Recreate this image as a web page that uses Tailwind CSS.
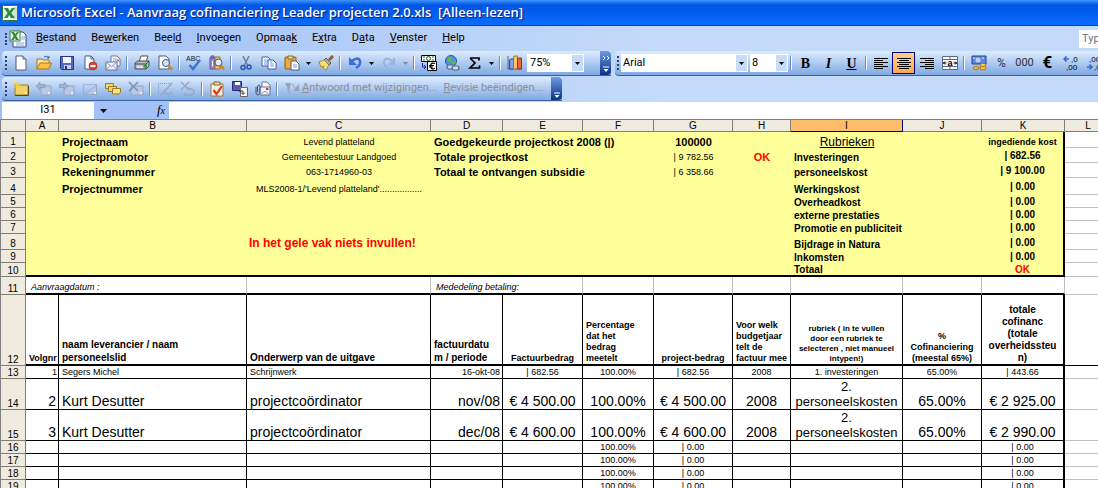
<!DOCTYPE html>
<html lang="nl">
<head>
<meta charset="utf-8">
<title>Microsoft Excel</title>
<script src="https://cdn.jsdelivr.net/npm/@tailwindcss/browser@4"></script>
</head>
<body class="h-screen overflow-hidden bg-white font-['Roboto','Noto_Sans',sans-serif] text-[11px] text-black">
<div class="flex h-full flex-col overflow-hidden">

<header class="flex h-[26px] shrink-0 items-center gap-[3px] bg-linear-to-b from-[#3d95ff] via-[#0054e3] via-20% to-[#0a6cff] border-b border-[#0040c8] pl-[2px]">
  <svg class="size-4 shrink-0" viewBox="0 0 16 16"><rect x=".5" y=".5" width="15" height="15" rx="1" fill="#fff" stroke="#2c7a36"/><path d="M11 2h4v12h-4z" fill="#cfe3d0"/><path d="M2 3h10v10H2z" fill="#e4f1e4"/><path d="M2 3h4l1.700 3L10 3h3L9.300 8l3.700 5H9L7.200 10 5.500 13H2l3.600-5z" fill="#2f8a3a"/></svg>
  <h1 class="whitespace-pre font-['Open_Sans',sans-serif] text-[13px] font-semibold text-white [text-shadow:1px_1px_1px_#0a1883]">Microsoft Excel - Aanvraag cofinanciering Leader projecten 2.0.xls  [Alleen-lezen]</h1>
</header>

<div class="shrink-0 bg-linear-to-r from-[#9ebef5] to-[#c4daf9] to-60%">
  <nav class="flex h-[25px] items-center pl-[5px]">
    <span class="mr-[2px] h-[12px] w-[2px] border-l-2 border-dotted border-[#27417a]"></span>
    <svg class="mr-[9px] size-[18px] shrink-0" viewBox="0 0 18 18"><path d="M8 2h6l3 3v12H4v-5" fill="#fff" stroke="#2a4a9a"/><path d="M12 7h4M12 9h4M7 13h8M7 15h8" stroke="#8aa5d8"/><path d="M1 1h10v10H1z" fill="#fff" stroke="#2c7a36"/><path d="M2 2h3l1.200 2L8 2h2L7.300 6 10 10H7L5.800 8 4.500 10H2l2.700-4z" fill="#2f8a3a"/></svg>
    <div class="flex gap-[15px] whitespace-nowrap">
      <button><u>B</u>estand</button><button>Be<u>w</u>erken</button><button>Beel<u>d</u></button><button><u>I</u>nvoegen</button><button>Opmaa<u>k</u></button><button>E<u>x</u>tra</button><button>D<u>a</u>ta</button><button><u>V</u>enster</button><button><u>H</u>elp</button>
    </div>
    <input aria-label="Typ een vraag" placeholder="Typ" class="ml-auto h-[18px] w-[19px] bg-white pl-[3px] text-[11px] placeholder:text-gray-500">
  </nav>

  <div class="flex h-[25px] gap-[4px] overflow-hidden pl-[2px]">
    <div class="flex shrink-0 items-center rounded-l border-b border-[#3b619c] bg-linear-to-b from-[#ddecfe] to-[#81a9e2] [&>button]:flex [&>button]:h-[22px] [&>button]:w-[23px] [&>button]:shrink-0 [&>button]:items-center [&>button]:justify-center [&_svg]:size-4 [&>i]:mx-[2px] [&>i]:h-[14px] [&>i]:w-[2px] [&>i]:border-l [&>i]:border-[#6a8ccb] [&>i]:bg-white">
      <span class="ml-[3px] mr-[2px] h-[14px] w-[2px] shrink-0 border-l-2 border-dotted border-[#27417a]"></span>
      <button aria-label="Nieuw"><svg viewBox="0 0 16 16"><path d="M3 1h7l3 3v11H3z" fill="#fff" stroke="#4a5c86"/><path d="M10 1v3h3" fill="#c6d4ee" stroke="#4a5c86"/></svg></button>
      <button aria-label="Openen"><svg viewBox="0 0 16 16"><path d="M1 14V4h5l1 1h6v3" fill="#ffe69a" stroke="#a8781c"/><path d="M1 14l3-6h11.500l-3 6z" fill="#fbc044" stroke="#a8781c"/><path d="M8 2q3-2 5 1m0-2v2h-2" fill="none" stroke="#3a5fa8"/></svg></button>
      <button aria-label="Opslaan"><svg viewBox="0 0 16 16"><path d="M1.500 1.500h13v13h-12l-1-1z" fill="#5468c4" stroke="#27338a"/><path d="M4 2h8v6H4z" fill="#f4f6ff"/><path d="M5 10h7v4H5z" fill="#c9cfe8"/><path d="M6 11h2v3H6z" fill="#27338a"/></svg></button>
      <button aria-label="Machtiging"><svg viewBox="0 0 16 16"><path d="M3 1h6l3 3v10H3z" fill="#fff" stroke="#4a5c86"/><path d="M9 1v3h3" fill="none" stroke="#4a5c86"/><circle cx="11" cy="11" r="4" fill="#e2492f" stroke="#a52410" stroke-width=".7"/><path d="M8.500 11h5" stroke="#fff" stroke-width="2"/></svg></button>
      <button aria-label="E-mail"><svg viewBox="0 0 16 16"><path d="M6 1h6l3 3v7H6z" fill="#fff" stroke="#66749a"/><path d="M8 4h4M8 6h5" stroke="#8aa5d8"/><path d="M12 4.500h2v2h-2z" fill="#e0662e"/><path d="M1 7h11v8H1z" fill="#f1f4fc" stroke="#66749a"/><path d="M1 7l5.500 4.500L12 7M1 15l4-4.500M12 15l-4-4.500" fill="none" stroke="#8d99b8"/></svg></button>
      <i></i>
      <button aria-label="Afdrukken"><svg viewBox="0 0 16 16"><path d="M5 7l2-6h7l-2 6z" fill="#fff" stroke="#555"/><path d="M1 8l3-2h11v5l-3 3H1z" fill="#b9bdc6" stroke="#444a58"/><path d="M1 9h11l3-3M12 9v5" fill="none" stroke="#444a58"/><path d="M3 12h6" stroke="#fff"/><path d="M9.500 11h3" stroke="#1ba81b" stroke-width="3"/></svg></button>
      <button aria-label="Afdrukvoorbeeld"><svg viewBox="0 0 16 16"><path d="M2 1h7l3 3v10H2z" fill="#fff" stroke="#4a5c86"/><circle cx="9" cy="8" r="3.500" fill="#cde4f8" stroke="#4d5a70"/><path d="M11.500 10.500L15 14.500" stroke="#c58a2b" stroke-width="2.500"/></svg></button>
      <i></i>
      <button aria-label="Spelling"><svg viewBox="0 0 16 16"><text x="0" y="6" font-family="Liberation Sans" font-size="7" fill="#222">ABC</text><path d="M3.500 10l3.500 4 7-9" fill="none" stroke="#3e74d8" stroke-width="2.500"/></svg></button>
      <button aria-label="Onderzoeken"><svg viewBox="0 0 16 16"><path d="M2 1h3v2H2z" fill="#b9a0e0" stroke="#5c4a9a"/><path d="M1 3h5v11H1z" fill="#9d8be0" stroke="#5c4a9a"/><path d="M6 2h5v12H6z" fill="#f0c060" stroke="#9a7420"/><path d="M3 6h1v5H3z" fill="#fff"/><circle cx="9.500" cy="7.500" r="3.500" fill="#dceefb" stroke="#4d5a70"/><path d="M12 10.500L15 14.500" stroke="#c58a2b" stroke-width="2.500"/></svg></button>
      <i></i>
      <button aria-label="Knippen"><svg viewBox="0 0 16 16"><path d="M5 1l5 10M11 1L6 11" stroke="#6d7f9f" stroke-width="1.500"/><circle cx="5" cy="12.500" r="2" fill="none" stroke="#2855b0" stroke-width="1.500"/><circle cx="11" cy="12" r="2" fill="none" stroke="#2855b0" stroke-width="1.500"/></svg></button>
      <button aria-label="Kopiëren"><svg viewBox="0 0 16 16"><path d="M1 2h6l2 2v7H1z" fill="#fff" stroke="#3c61b0"/><path d="M3 5h4M3 7h4M3 9h3" stroke="#7d9bdc"/><path d="M7 5h5l3 3v6H7z" fill="#fff" stroke="#3c61b0"/><path d="M9 9h4M9 11h4M9 7h2" stroke="#7d9bdc"/></svg></button>
      <button aria-label="Plakken"><svg viewBox="0 0 16 16"><rect x="1" y="2" width="11" height="12" rx="1" fill="#f0a83c" stroke="#8a5f14"/><path d="M4 1h5v3H4z" fill="#f3dc8c" stroke="#7a6a3a"/><path d="M7 6h5l3 3v6H7z" fill="#fff" stroke="#4a5c86"/><path d="M9 10h4M9 12h4" stroke="#7d9bdc"/></svg></button>
      <svg class="w-[11px]! shrink-0" viewBox="0 0 11 16"><path d="M3 7h5L5.500 10z"/></svg>
      <button aria-label="Opmaak kopiëren"><svg viewBox="0 0 16 16"><path d="M15 1l-4 4" stroke="#8a5f2a" stroke-width="3"/><path d="M8 3l5 5-2 2-5-5z" fill="#a9a4c8" stroke="#5a5570"/><path d="M1 7l5-2 5 5-3 5-3-2 1-2-3 1z" fill="#f5df84" stroke="#a58a2c"/></svg></button>
      <i></i>
      <button aria-label="Ongedaan maken"><svg viewBox="0 0 16 16"><path d="M5 6q6-5 8 0 1 4-4 7" fill="none" stroke="#3b6fd6" stroke-width="2.500"/><path d="M2 2v8h8z" fill="#3b6fd6"/></svg></button>
      <svg class="w-[11px]! shrink-0" viewBox="0 0 11 16"><path d="M3 7h5L5.500 10z"/></svg>
      <button aria-label="Opnieuw"><svg viewBox="0 0 16 16"><path d="M11 6q-6-5-8 0-1 4 4 7" fill="none" stroke="#9fb4dc" stroke-width="2"/><path d="M14 2v8H7z" fill="#9fb4dc"/></svg></button>
      <svg class="w-[11px]! shrink-0" viewBox="0 0 11 16"><path d="M3 7h5L5.500 10z" fill="#808a9c"/></svg>
      <i></i>
      <button aria-label="Euro omrekenen"><svg viewBox="0 0 16 16"><path d="M.5.500h14v6H.5z" fill="#fff" stroke="#000"/><circle cx="7.500" cy="3.500" r="2" fill="none" stroke="#187018"/><path d="M2 2h2M11 2h2M2 5h2M11 5h2" stroke="#187018"/><path d="M6.500 6.500h9v9h-9z" fill="#fff" stroke="#000"/><path d="M14 8.500q-4-1.500-4.500 2.500.5 4 4.500 2.500M8 10.500h5M8 12h4" fill="none" stroke="#000" stroke-width="1.200"/><path d="M1.500 8v4h3M3 10l2 2-2 2" fill="none" stroke="#2020b0"/></svg></button>
      <button aria-label="Hyperlink"><svg viewBox="0 0 16 16"><circle cx="7" cy="6" r="5.500" fill="#4d93e0" stroke="#2b5a9c"/><path d="M3 3q3-3 5 0l-1 3-3 1zM8 7l4-2v3l-3 2z" fill="#5fb64c"/><rect x="3" y="10" width="7" height="4" rx="2" fill="#cfd9ea" stroke="#59667e" stroke-width="1.200"/><rect x="8" y="11" width="7" height="4" rx="2" fill="#cfd9ea" stroke="#59667e" stroke-width="1.200"/></svg></button>
      <button aria-label="AutoSom"><svg viewBox="0 0 16 16"><path d="M3 3h9v2.500M3 3l5 5-5 5h9.500v-2.500" fill="none" stroke="#000" stroke-width="1.700"/></svg></button>
      <svg class="w-[11px]! shrink-0" viewBox="0 0 11 16"><path d="M3 7h5L5.500 10z"/></svg>
      <i></i>
      <button aria-label="Grafieken"><svg viewBox="0 0 16 16"><path d="M1 1v13h14" fill="none" stroke="#59667e"/><path d="M2.500 5l1-1h3v10h-4z" fill="#7d9ee8" stroke="#2e4a98"/><path d="M6.500 2l1-1h3v13h-4z" fill="#f6c956" stroke="#9a7420"/><path d="M10.500 4l1-1h3v11h-4z" fill="#e8643c" stroke="#94321a"/></svg></button>
      <div class="relative mx-[1px] h-[18px] w-[57px] shrink-0 bg-white">
        <select aria-label="In- en uitzoomen" class="h-full w-full appearance-none pl-[3px] text-[11px]"><option>75%</option></select>
        <span class="pointer-events-none absolute inset-y-px right-px flex w-[11px] items-center justify-center bg-[#c6dbf8]"><svg class="size-[5px]!" viewBox="0 0 5 3"><path d="M0 0h5L2.500 3z"/></svg></span>
      </div>
      <button aria-label="Werkbalkopties" class="ml-[15px] w-[11px]! h-full! self-stretch rounded-r bg-linear-to-b from-[#6f9be4] to-[#0a3187]"><svg class="h-5! w-2!" viewBox="0 0 8 20"><path d="M1 3l2 2-2 2M5 3l2 2-2 2M1 14h6" fill="none" stroke="#fff"/><path d="M1.500 16h5L4 19z" fill="#fff"/></svg></button>
    </div>
    <div class="flex grow items-center rounded-l border-b border-[#3b619c] bg-linear-to-b from-[#ddecfe] to-[#81a9e2] [&>button]:flex [&>button]:h-[22px] [&>button]:w-[23px] [&>button]:shrink-0 [&>button]:items-center [&>button]:justify-center [&_svg]:size-4 [&>i]:mx-[2px] [&>i]:h-[14px] [&>i]:w-[2px] [&>i]:shrink-0 [&>i]:border-l [&>i]:border-[#6a8ccb] [&>i]:bg-white">
      <span class="mx-[2px] h-[14px] w-[2px] shrink-0 border-l-2 border-dotted border-[#27417a]"></span>
      <div class="relative h-[18px] w-[127px] shrink-0 bg-white">
        <select aria-label="Lettertype" class="h-full w-full appearance-none pl-[2px] text-[11px]"><option>Arial</option></select>
        <span class="pointer-events-none absolute inset-y-px right-px flex w-[11px] items-center justify-center bg-[#c6dbf8]"><svg class="size-[5px]!" viewBox="0 0 5 3"><path d="M0 0h5L2.500 3z"/></svg></span>
      </div>
      <div class="relative ml-[2px] h-[18px] w-[38px] shrink-0 bg-white">
        <select aria-label="Tekengrootte" class="h-full w-full appearance-none pl-[2px] text-[11px]"><option>8</option></select>
        <span class="pointer-events-none absolute inset-y-px right-px flex w-[11px] items-center justify-center bg-[#c6dbf8]"><svg class="size-[5px]!" viewBox="0 0 5 3"><path d="M0 0h5L2.500 3z"/></svg></span>
      </div>
      <i></i>
      <button class="font-['Liberation_Serif',serif] text-[14px] font-bold">B</button>
      <button class="font-['Liberation_Serif',serif] text-[14px] font-bold italic">I</button>
      <button class="font-['Liberation_Serif',serif] text-[14px] font-bold underline">U</button>
      <i></i>
      <button aria-label="Links uitlijnen"><svg viewBox="0 0 16 16"><path d="M1 3.500h14M1 5.500h9M1 7.500h14M1 9.500h9M1 11.500h14M1 13.500h9" stroke="#000"/></svg></button>
      <button aria-label="Centreren" class="border border-[#000080] bg-linear-to-b from-[#ffd08c] to-[#ffa850]"><svg viewBox="0 0 16 16"><path d="M1 3.500h14M3 5.500h10M1 7.500h14M3 9.500h10M1 11.500h14M3 13.500h10" stroke="#000"/></svg></button>
      <button aria-label="Rechts uitlijnen"><svg viewBox="0 0 16 16"><path d="M1 3.500h14M6 5.500h9M1 7.500h14M6 9.500h9M1 11.500h14M6 13.500h9" stroke="#000"/></svg></button>
      <button aria-label="Samenvoegen en centreren"><svg viewBox="0 0 16 16"><path d="M.5 1.500h15v13H.5z" fill="#fff" stroke="#5a6b8c"/><path d="M0 4.500h16M0 11.500h16M8 1v3.500M8 11.500V15" stroke="#5a6b8c"/><path d="M1 8h3.500M15 8h-3.500M3 6.500L1.500 8 3 9.500M13 6.500L14.500 8 13 9.500" fill="none" stroke="#000"/><text x="5.500" y="10.500" font-family="Liberation Sans" font-size="9" font-weight="bold">a</text></svg></button>
      <i></i>
      <button aria-label="Valuta"><svg viewBox="0 0 16 16"><path d="M1 1h14v8H1z" fill="#5f86dc" stroke="#27479a"/><circle cx="7" cy="5" r="2.500" fill="#bdd0f6"/><path d="M2 3h2M11 3h2" stroke="#dfe9ff"/><ellipse cx="12" cy="13" rx="3" ry="2" fill="#f5c23c" stroke="#a87812"/><ellipse cx="12" cy="10" rx="3" ry="1.500" fill="#fbd663" stroke="#a87812"/><ellipse cx="5" cy="13" rx="3" ry="1.500" fill="#f5c23c" stroke="#a87812"/></svg></button>
      <button class="text-[12px] text-[#333]">%</button>
      <button class="text-[11px] text-[#333]">000</button>
      <button class="text-[17px] font-bold">€</button>
      <button aria-label="Meer decimalen"><svg viewBox="0 0 16 16"><path d="M1 4h5M3.500 1.500L1 4l2.500 2.500" fill="none" stroke="#3569cc" stroke-width="1.500"/><text x="8" y="7" font-family="Liberation Sans" font-size="8">,0</text><text x="3" y="15" font-family="Liberation Sans" font-size="8">,00</text></svg></button>
      <button aria-label="Minder decimalen"><svg viewBox="0 0 16 16"><path d="M1 12h5M3.500 9.500L6 12l-2.500 2.500" fill="none" stroke="#3569cc" stroke-width="1.500"/><text x="3" y="7" font-family="Liberation Sans" font-size="8">,00</text><text x="8" y="15" font-family="Liberation Sans" font-size="8">,0</text></svg></button>
    </div>
  </div>

  <div class="flex h-[26px] pb-px pt-px pl-[2px]">
    <div class="flex shrink-0 items-center rounded-l border-b border-[#3b619c] bg-linear-to-b from-[#ddecfe] to-[#81a9e2] [&>button]:flex [&>button]:h-[22px] [&>button]:w-[23px] [&>button]:shrink-0 [&>button]:items-center [&>button]:justify-center [&_svg]:size-4 [&>i]:mx-[2px] [&>i]:h-[14px] [&>i]:w-[2px] [&>i]:border-l [&>i]:border-[#6a8ccb] [&>i]:bg-white">
      <span class="ml-[3px] mr-[2px] h-[14px] w-[2px] shrink-0 border-l-2 border-dotted border-[#27417a]"></span>
      <button aria-label="Nieuwe opmerking"><svg viewBox="0 0 16 16"><path d="M2 4h13v8l-2 2H2z" fill="#f0d468" stroke="#9a7a22"/><path d="M2 14.500h13.500V5" fill="none" stroke="#5a4810"/><path d="M12 11h2v2h-2z" fill="#fff6c8"/><path d="M4 0v8M0 4h8M1 1l6 6M7 1L1 7" stroke="#f8d030"/></svg></button>
      <button aria-label="Vorige opmerking"><svg viewBox="0 0 16 16"><path d="M5 5h10v9H5z" fill="#b7c8e6" stroke="#98a8c6"/><path d="M12 11h2v2h-2z" fill="#e4edfb"/><path d="M0 5l4-4v2.500h5v3H4V9z" fill="#a3b3d0" stroke="#8090b0" stroke-width=".6"/></svg></button>
      <button aria-label="Volgende opmerking"><svg viewBox="0 0 16 16"><path d="M5 5h10v9H5z" fill="#b7c8e6" stroke="#98a8c6"/><path d="M12 11h2v2h-2z" fill="#e4edfb"/><path d="M9 5L5 1v2.500H0v3h5V9z" fill="#a3b3d0" stroke="#8090b0" stroke-width=".6"/></svg></button>
      <button aria-label="Opmerking weergeven"><svg viewBox="0 0 16 16"><path d="M1.500 3.500h13v10h-13z" fill="none" stroke="#8b9ab8" stroke-dasharray="1 1"/><path d="M14.500 4v9.500H3z" fill="#b7c8e6" stroke="#98a8c6"/><path d="M12 11h2v2h-2z" fill="#e4edfb"/></svg></button>
      <button aria-label="Alle opmerkingen"><svg viewBox="0 0 16 16"><path d="M.5 2.500h8v5h-8z" fill="#f7d469" stroke="#9a7a22"/><path d="M3.500 5.500h8v5h-8z" fill="#f7d469" stroke="#9a7a22"/><path d="M7.500 7.500h8v4l-2 1.500h-6z" fill="#fbe08a" stroke="#9a7a22"/></svg></button>
      <button aria-label="Opmerking verwijderen"><svg viewBox="0 0 16 16"><path d="M3 5h12v9H3z" fill="#b7c8e6" stroke="#98a8c6"/><path d="M12 11h2v2h-2z" fill="#e4edfb"/><path d="M1 1l9 9M10 1l-9 9" stroke="#8090b0" stroke-width="1.500"/></svg></button>
      <i></i>
      <button aria-label="Inktannotatie"><svg viewBox="0 0 16 16"><path d="M1 2.500h13M1.500 2v11" fill="none" stroke="#8b9ab8" stroke-dasharray="1 1"/><path d="M15 2L6 12M3 14q5-3 7-1t5-2" fill="none" stroke="#98a8c6" stroke-width="1.500"/></svg></button>
      <button aria-label="Inkt verwijderen"><svg viewBox="0 0 16 16"><path d="M1 1l8 8M9 1L1 9" stroke="#98a8c6" stroke-width="1.500"/><path d="M4 13q7 3 10-1 1-4-7-5" fill="none" stroke="#98a8c6" stroke-width="1.500"/></svg></button>
      <i></i>
      <button aria-label="Taak maken"><svg viewBox="0 0 16 16"><path d="M2 3h12v12H2z" fill="#f6f0e2" stroke="#a8703a"/><path d="M5 1h6v3H5z" fill="#f3dc8c" stroke="#7a6a3a"/><path d="M4.500 9l3 4L13 5" fill="none" stroke="#d93a1c" stroke-width="2.200"/></svg></button>
      <button aria-label="Bestand bijwerken"><svg viewBox="0 0 16 16"><path d="M.5.500h9v9h-9z" fill="#5c5cae" stroke="#27277a"/><path d="M3 1h5v3H3z" fill="#fff"/><path d="M8.500 6.500h7v9h-7z" fill="#fff" stroke="#666"/><path d="M6 10h5v3M9 11.500l2 2 2-2" fill="none" stroke="#333"/></svg></button>
      <button aria-label="Als bijlage verzenden"><svg viewBox="0 0 16 16"><path d="M7 1h5l3 3v5H7z" fill="#fff" stroke="#66749a"/><path d="M5 6h10v8H5z" fill="#f1f4fc" stroke="#66749a"/><path d="M5 14l5-4 5 4" fill="none" stroke="#8d99b8"/><path d="M1 6v6q1.500 4 4 0V5q-1.200-2-2.500 0v6" fill="none" stroke="#444f66"/><path d="M11 8h2.500" stroke="#d93a1c" stroke-width="2"/></svg></button>
      <i></i>
      <button class="w-auto! gap-[2px] whitespace-nowrap pl-[4px] pr-[6px] text-[#8c8f98]"><svg viewBox="0 0 16 16"><path d="M1 2h6l-1 4-2 5-1-5zM15 3v7H9z" fill="#9aa3b8"/><path d="M4 6q2 2 1 7M8 3q2 3 4 5" fill="none" stroke="#9aa3b8"/></svg><span><u>A</u>ntwoord met wijzigingen...</span></button>
      <button class="w-auto! whitespace-nowrap pr-[8px] text-[#8c8f98]"><span><u>R</u>evisie beëindigen...</span></button>
      <button aria-label="Werkbalkopties" class="w-[11px]! h-full! self-stretch rounded-r bg-linear-to-b from-[#6f9be4] to-[#0a3187]"><svg class="h-5! w-2!" viewBox="0 0 8 20"><path d="M1 14h6" stroke="#fff"/><path d="M1.500 16h5L4 19z" fill="#fff"/></svg></button>
    </div>
  </div>

  <div class="flex h-[17px] pl-[2px]">
    <input aria-label="Naamvak" value="I31" class="w-[92px] bg-white text-center text-[11px]">
    <button aria-label="Namen" class="flex w-[19px] items-center justify-center bg-[#a3c1f6]"><svg class="h-1 w-[7px]" viewBox="0 0 7 4"><path d="M0 0h7L3.500 4z"/></svg></button>
    <button aria-label="Functie invoegen" class="w-[56px] bg-[#a3c1f6] pr-[4px] text-right font-['Liberation_Serif',serif] text-[13px] leading-[14px] italic">f<span class="text-[10px]">x</span></button>
    <input aria-label="Formule" class="min-w-0 grow bg-white">
  </div>
</div>

<main class="min-h-0 grow overflow-hidden border-l border-t border-[#808080] bg-white">
<table class="w-[1111px] table-fixed border-separate border-spacing-0 font-['Liberation_Sans',sans-serif] text-[9px] leading-[11px] [&_td]:overflow-hidden [&_td]:whitespace-nowrap [&_td]:px-[3px] [&_td]:py-0 [&_td]:align-bottom [&_th]:border-b [&_th]:border-r [&_th]:border-[#808070] [&_th]:bg-[#efebde] [&_th]:p-0 [&_th]:align-bottom [&_th]:text-[10px] [&_th]:font-normal">
<colgroup><col class="w-[25px]"><col class="w-[33px]"><col class="w-[188px]"><col class="w-[184px]"><col class="w-[72px]"><col class="w-[80px]"><col class="w-[71px]"><col class="w-[79px]"><col class="w-[58px]"><col class="w-[112px]"><col class="w-[79px]"><col class="w-[83px]"><col class="w-[47px]"></colgroup>
<thead><tr class="h-[12px]"><th></th><th>A</th><th>B</th><th>C</th><th>D</th><th>E</th><th>F</th><th>G</th><th>H</th><th class="border-[#000080]! bg-[#ffbd6b]!">I</th><th>J</th><th>K</th><th>L</th></tr></thead>
<tbody class="[&_td]:bg-[#ffff99] [&_td:nth-child(3)]:text-[11px] [&_td:nth-child(3)]:font-bold [&_td:nth-last-child(2)]:border-r-2 [&_td:nth-last-child(2)]:border-black [&_td:nth-last-child(2)]:text-center [&_td:nth-last-child(2)]:align-middle [&_td:nth-last-child(2)]:text-[10px] [&_td:nth-last-child(2)]:font-bold [&_td:nth-last-child(3)]:text-[10px] [&_td:nth-last-child(3)]:font-bold [&_td:last-child]:border-b [&_td:last-child]:border-[#c0c0c0] [&_td:last-child]:bg-white">
<tr class="h-[16px]"><th>1</th><td></td><td>Projectnaam</td><td class="text-center">Levend platteland</td><td colspan="3" class="text-[11px] font-bold">Goedgekeurde projectkost 2008 (|)</td><td class="text-center text-[11px] font-bold">100000</td><td></td><td class="text-center text-[12px]! font-normal! underline">Rubrieken</td><td></td><td class="align-bottom! text-[9px]!">ingediende kost</td><td></td></tr>
<tr class="h-[15px]"><th>2</th><td></td><td>Projectpromotor</td><td class="text-center">Gemeentebestuur Landgoed</td><td colspan="3" class="text-[11px] font-bold">Totale projectkost</td><td class="text-center">| 9 782.56</td><td class="text-center text-[11px] font-bold text-[#ff0000]">OK</td><td colspan="2">Investeringen</td><td>| 682.56</td><td></td></tr>
<tr class="h-[15px]"><th>3</th><td></td><td>Rekeningnummer</td><td class="text-center">063-1714960-03</td><td colspan="3" class="text-[11px] font-bold">Totaal te ontvangen subsidie</td><td class="text-center">| 6 358.66</td><td></td><td colspan="2">personeelskost</td><td>| 9 100.00</td><td></td></tr>
<tr class="h-[17px]"><th>4</th><td></td><td>Projectnummer</td><td class="text-center">MLS2008-1/'Levend platteland'.................</td><td colspan="3"></td><td></td><td></td><td colspan="2">Werkingskost</td><td>| 0.00</td><td></td></tr>
<tr class="h-[13px]"><th>5</th><td></td><td></td><td></td><td colspan="3"></td><td></td><td></td><td colspan="2">Overheadkost</td><td>| 0.00</td><td></td></tr>
<tr class="h-[13px]"><th>6</th><td></td><td></td><td></td><td colspan="3"></td><td></td><td></td><td colspan="2">externe prestaties</td><td>| 0.00</td><td></td></tr>
<tr class="h-[13px]"><th>7</th><td></td><td></td><td></td><td colspan="3"></td><td></td><td></td><td colspan="2">Promotie en publiciteit</td><td>| 0.00</td><td></td></tr>
<tr class="h-[16px]"><th>8</th><td></td><td></td><td class="pl-[2px]! text-[12px] leading-[14px] font-bold text-[#ff0000]">In het gele vak niets invullen!</td><td colspan="3"></td><td></td><td></td><td colspan="2">Bijdrage in Natura</td><td>| 0.00</td><td></td></tr>
<tr class="h-[13px]"><th>9</th><td></td><td></td><td></td><td colspan="3"></td><td></td><td></td><td colspan="2">Inkomsten</td><td>| 0.00</td><td></td></tr>
<tr class="h-[14px] [&_td:not(:last-child)]:border-b-2 [&_td]:border-black"><th>10</th><td></td><td></td><td></td><td colspan="3"></td><td></td><td></td><td colspan="2">Totaal</td><td class="text-[#ff0000]">OK</td><td></td></tr>
</tbody>
<tbody class="[&_td]:border-r [&_td]:border-r-[#c0c0c0] [&_td]:border-b-2 [&_td]:border-b-black [&_td:last-child]:border-b [&_td:last-child]:border-b-[#c0c0c0]">
<tr class="h-[18px]"><th>11</th><td colspan="2" class="pl-[5px]! italic">Aanvraagdatum :</td><td></td><td colspan="2" class="pl-[5px]! italic">Mededeling betaling:</td><td></td><td></td><td></td><td></td><td></td><td></td><td></td></tr>
</tbody>
<tbody class="[&_td]:border-r [&_td]:border-b [&_td]:border-black [&_td:nth-child(12)]:border-r-2 [&_td:nth-child(n+7)]:text-center [&_td:nth-child(6)]:text-center">
<tr class="h-[71px] font-bold [&_td:not(:last-child)]:border-b-2"><th>12</th><td>Volgnr</td><td class="text-[10px] leading-[13px]">naam leverancier / naam<br>personeelslid</td><td class="text-[10px] leading-[13px]">Onderwerp van de uitgave</td><td class="text-[10px] leading-[13px]">factuurdatu<br>m / periode</td><td>Factuurbedrag</td><td class="text-left!">Percentage<br>dat het<br>bedrag<br>meetelt</td><td>project-bedrag</td><td class="text-left!">Voor welk<br>budgetjaar<br>telt de<br>factuur mee</td><td class="px-0! text-[8px] leading-[10px]">rubriek ( in te vullen<br>door een rubriek te<br>selecteren , niet manueel<br>intypen!)</td><td>%<br>Cofinanciering<br>(meestal 65%)</td><td class="text-[10px] leading-[12px]">totale<br>cofinanc<br>(totale<br>overheidssteu<br>n)</td><td></td></tr>
<tr class="h-[13px]"><th>13</th><td class="pr-px! text-right">1</td><td>Segers Michel</td><td>Schrijnwerk</td><td class="pr-[2px]! text-right">16-okt-08</td><td>| 682.56</td><td>100.00%</td><td>| 682.56</td><td>2008</td><td>1. investeringen</td><td>65.00%</td><td>| 443.66</td><td class="border-[#c0c0c0]!"></td></tr>
<tr class="h-[31px] text-[14px] leading-[15px]"><th class="leading-[11px]">14</th><td class="pr-[2px]! text-right">2</td><td>Kurt Desutter</td><td>projectcoördinator</td><td class="pr-[2px]! text-right">nov/08</td><td>€ 4 500.00</td><td>100.00%</td><td>€ 4 500.00</td><td>2008</td><td class="px-0! text-[13px]">2.<br>personeelskosten</td><td>65.00%</td><td>€ 2 925.00</td><td class="border-[#c0c0c0]!"></td></tr>
<tr class="h-[31px] text-[14px] leading-[15px]"><th class="leading-[11px]">15</th><td class="pr-[2px]! text-right">3</td><td>Kurt Desutter</td><td>projectcoördinator</td><td class="pr-[2px]! text-right">dec/08</td><td>€ 4 600.00</td><td>100.00%</td><td>€ 4 600.00</td><td>2008</td><td class="px-0! text-[13px]">2.<br>personeelskosten</td><td>65.00%</td><td>€ 2 990.00</td><td class="border-[#c0c0c0]!"></td></tr>
<tr class="h-[13px]"><th>16</th><td></td><td></td><td></td><td></td><td></td><td>100.00%</td><td>| 0.00</td><td></td><td></td><td></td><td>| 0.00</td><td class="border-[#c0c0c0]!"></td></tr>
<tr class="h-[13px]"><th>17</th><td></td><td></td><td></td><td></td><td></td><td>100.00%</td><td>| 0.00</td><td></td><td></td><td></td><td>| 0.00</td><td class="border-[#c0c0c0]!"></td></tr>
<tr class="h-[13px]"><th>18</th><td></td><td></td><td></td><td></td><td></td><td>100.00%</td><td>| 0.00</td><td></td><td></td><td></td><td>| 0.00</td><td class="border-[#c0c0c0]!"></td></tr>
<tr class="h-[13px]"><th>19</th><td></td><td></td><td></td><td></td><td></td><td>100.00%</td><td>| 0.00</td><td></td><td></td><td></td><td>| 0.00</td><td class="border-[#c0c0c0]!"></td></tr>
</tbody>
</table>
</main>
</div>
</body>
</html>
